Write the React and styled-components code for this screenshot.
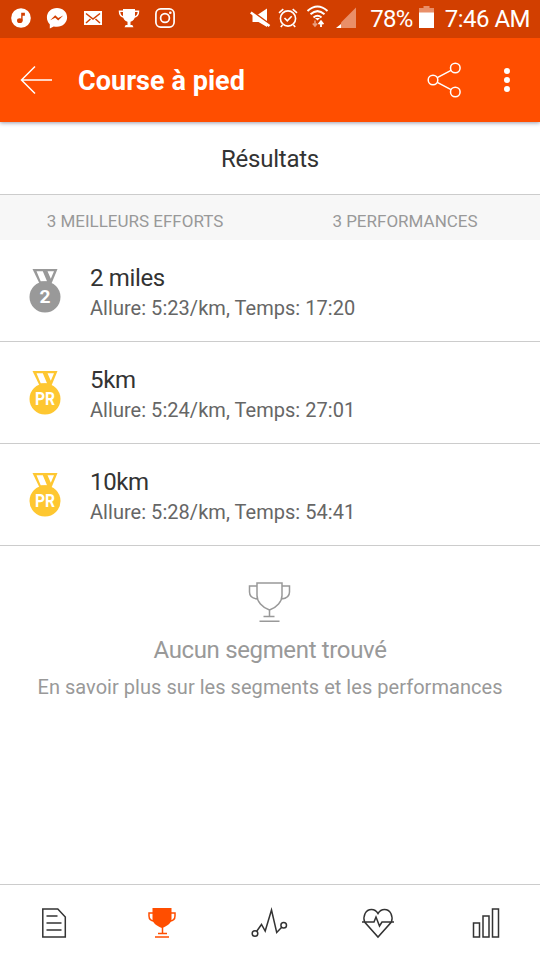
import React from 'react';
import styled, { createGlobalStyle } from 'styled-components';

const GlobalStyle = createGlobalStyle`
  body {
    margin: 0;
    background: #ffffff;
    font-family: Roboto, 'Liberation Sans', sans-serif;
  }
`;

const Screen = styled.div`
  display: flex;
  flex-direction: column;
  width: 540px;
  height: 960px;
  overflow: hidden;
  background: #ffffff;
`;

const StatusBar = styled.div`
  display: flex;
  justify-content: space-between;
  box-sizing: border-box;
  height: 38px;
  padding: 0 10px 0 9px;
  background: #d23f00;
  color: #ffffff;
  z-index: 2;
`;

const StatusGroup = styled.div`
  display: flex;
  align-items: center;
  gap: ${(props) => props.$gap || 0}px;
`;

const IconGroup = styled(StatusGroup)`
  padding-bottom: 2px;
`;

const StatusText = styled.span`
  font-size: 24px;
  line-height: 38px;
  letter-spacing: ${(props) => props.$spacing}px;
  white-space: nowrap;
`;

const Icon = styled.svg`
  display: block;
  flex: none;
  overflow: visible;
  fill: none;
  stroke: currentColor;
`;

const Battery = styled(Icon)`
  margin: -4px 11px 0 6px;
`;

const AppBar = styled.header`
  display: flex;
  align-items: center;
  box-sizing: border-box;
  height: 84px;
  padding: 0 20px;
  background: #ff4e00;
  color: #ffffff;
  box-shadow: 0 1px 4px rgba(30, 30, 70, 0.45);
  z-index: 1;
`;

const Title = styled.h1`
  flex: 1;
  margin: 2px 0 0 25px;
  font-size: 27px;
  line-height: 32px;
  font-weight: 700;
  letter-spacing: 0.05px;
`;

const MoreIcon = styled(Icon)`
  margin-left: 33px;
`;

const SectionTitle = styled.h2`
  box-sizing: border-box;
  height: 73px;
  margin: 0;
  padding-top: 1px;
  border-bottom: 1px solid #cccccc;
  color: #333333;
  font-size: 24px;
  font-weight: 400;
  letter-spacing: -0.25px;
  line-height: 72px;
  text-align: center;
`;

const Summary = styled.div`
  display: grid;
  grid-template-columns: 1fr 1fr;
  height: 45px;
  background: #f7f7f7;
  color: #999999;
  font-size: 17px;
  line-height: 53px;
  text-align: center;
`;

const EffortRow = styled.div`
  display: flex;
  box-sizing: border-box;
  height: 102px;
  padding: 23px 29px 0;
  border-bottom: 1px solid #cccccc;
`;

const Medal = styled(Icon)`
  margin-top: 5px;
  color: ${(props) => props.$color};
`;

const MedalText = styled.text`
  fill: #ffffff;
  stroke: none;
  font-size: 18px;
  font-weight: 700;
  text-anchor: middle;
`;

const EffortBody = styled.div`
  margin-left: 29px;
`;

const EffortName = styled.div`
  color: #333333;
  font-size: 24px;
  letter-spacing: -0.35px;
  line-height: 30px;
`;

const EffortDetail = styled.div`
  color: #666666;
  font-size: 20px;
  letter-spacing: 0.04px;
  line-height: 30px;
`;

const Empty = styled.div`
  display: flex;
  flex: 1;
  flex-direction: column;
  align-items: center;
  padding-top: 36px;
  color: #999999;
`;

const EmptyTitle = styled.div`
  margin-top: 12px;
  font-size: 24px;
  letter-spacing: -0.35px;
  line-height: 30px;
`;

const EmptyLink = styled.div`
  margin-top: 7px;
  font-size: 20px;
  letter-spacing: 0.04px;
  line-height: 30px;
`;

const TabBar = styled.nav`
  display: grid;
  grid-template-columns: repeat(5, 1fr);
  box-sizing: border-box;
  height: 76px;
  border-top: 1px solid #cccccc;
`;

const Tab = styled.div`
  display: flex;
  align-items: center;
  justify-content: center;
  color: ${(props) => (props.$active ? '#ff4e00' : '#333333')};
`;

const efforts = [
  { name: '2 miles', detail: 'Allure: 5:23/km, Temps: 17:20', medal: '2', color: '#999999' },
  { name: '5km', detail: 'Allure: 5:24/km, Temps: 27:01', medal: 'PR', color: '#fec731' },
  { name: '10km', detail: 'Allure: 5:28/km, Temps: 54:41', medal: 'PR', color: '#fec731' },
];

const NotificationIcons = () => (
  <IconGroup $gap={12}>
    <Icon width="24" height="24" viewBox="0 0 24 24">
      <circle cx="12" cy="12" r="9.8" fill="#fff" stroke="none" />
      <ellipse cx="10.8" cy="14.7" rx="2.8" ry="2.4" fill="#d23f00" stroke="none" />
      <path d="M12.2 14.7V6.8h3.7v3h-2.3v5z" fill="#d23f00" stroke="none" />
    </Icon>
    <Icon width="24" height="24" viewBox="0 0 24 24">
      <path d="M12 2C6.200 2 1.900 6.100 1.900 11.300c0 3.100 1.200 5.400 2.900 7v4.300l3.900-2.200c1 .3 2.100.4 3.300.4 5.800 0 10.100-4.200 10.100-9.500S17.800 2 12 2z" fill="#fff" stroke="none" />
      <path d="M5.200 14.300l5-5 3 2.600 5-2.500-5 5-3-2.600z" fill="#d23f00" stroke="none" />
    </Icon>
    <Icon width="24" height="24" viewBox="0 0 24 24">
      <path d="M3 5h18v14H3z" fill="#fff" stroke="none" />
      <path d="M5 7.500l7 5.500 7-5.500M5 17l4.500-4M19 17l-4.500-4" stroke="#d23f00" strokeWidth="1.500" />
    </Icon>
    <Icon width="24" height="24" viewBox="0 0 24 24">
      <path d="M6 3h12v7c0 3-2 5-4.500 5.700V19h1.800l1.200 2.200h-9L8.700 19h1.800v-3.300C8 15 6 13 6 10z" fill="#fff" stroke="none" />
      <path d="M6.500 5.200h-4c0 4 1.500 5.600 5 6M17.500 5.200h4c0 4-1.500 5.600-5 6" strokeWidth="1.500" />
    </Icon>
    <Icon width="24" height="24" viewBox="0 0 24 24">
      <rect x="2.900" y="2.900" width="18.200" height="18.200" rx="4.800" strokeWidth="1.700" />
      <circle cx="12" cy="12" r="4.400" strokeWidth="1.700" />
      <circle cx="17.300" cy="6.800" r="1.300" fill="#fff" stroke="none" />
    </Icon>
  </IconGroup>
);

const SystemIcons = () => (
  <StatusGroup>
    <IconGroup $gap={5}>
      <Icon width="24" height="24" viewBox="0 0 24 24">
        <path d="M3.500 8.500h5.500L18 2.500V21L9.500 16h-6z" fill="#fff" stroke="none" />
        <path d="M2 4.500l19 14" stroke="#d23f00" strokeWidth="2" />
        <path d="M1.800 6.500L20.500 20" strokeWidth="2.600" />
      </Icon>
      <Icon width="24" height="24" viewBox="1 0 24 24">
        <circle cx="11" cy="12.500" r="7.600" strokeWidth="1.600" />
        <path d="M7.500 12l2.800 2.900 4.400-4.600M5.500 19l-1.700 2M16.500 19l1.700 2M2 6.800l4.300-3.600M20 6.800l-4.300-3.600" strokeWidth="1.600" />
      </Icon>
      <Icon width="24" height="24" viewBox="1 0 24 24">
        <path d="M1.500 4.900Q11.500-3.900 21.500 4.900M4.500 8.300Q11.500 1.900 18.500 8.300M7.500 11.500Q11.500 8.100 15.500 11.500" strokeWidth="2" />
        <path d="M9 12h5l-2.500 2.500z" fill="#fff" stroke="none" />
        <path d="M9 14.500v5M6.800 17.500l2.200 2.500 2.200-2.500" opacity=".5" strokeWidth="1.600" />
        <path d="M15 21v-5M12.600 18.200l2.400-3 2.400 3" strokeWidth="1.800" />
      </Icon>
      <Icon width="24" height="24" viewBox="1 0 24 24">
        <path d="M21 1.500V22H6V16.500z" fill="#e98f69" stroke="none" />
        <path d="M6 18v4H1z" fill="#fff" stroke="none" />
      </Icon>
    </IconGroup>
    <StatusText $spacing={-0.7}>&nbsp;&nbsp;78%</StatusText>
    <Battery width="15" height="22" viewBox="0 0 15 22">
      <path d="M0 2h4.500V0h6v2H15v5H0z" fill="#e98f69" stroke="none" />
      <path d="M0 6.500h15V22H0z" fill="#fff" stroke="none" />
    </Battery>
    <StatusText $spacing={-0.5}>7:46 AM</StatusText>
  </StatusGroup>
);

const EffortMedal = ({ label, color }) => (
  <Medal width="32" height="46" viewBox="0 0 32 46" $color={color}>
    <path d="M3.500 1h25L22.500 15.500h-12z" fill="currentColor" stroke="none" />
    <path d="M7.500 3.300h6.300l4.200 10h-6.300zM18.500 3.300h6.500l-3.200 7.500z" fill="#fff" stroke="none" />
    <circle cx="16" cy="29" r="15.500" fill="currentColor" stroke="none" />
    <MedalText x="16" y="35.300" textLength={label === 'PR' ? 20 : 11} lengthAdjust="spacingAndGlyphs">
      {label}
    </MedalText>
  </Medal>
);

const App = () => (
  <Screen>
    <GlobalStyle />
    <StatusBar>
      <NotificationIcons />
      <SystemIcons />
    </StatusBar>
    <AppBar>
      <Icon width="33" height="30" viewBox="0 0 33 30" strokeWidth="1.500">
        <path d="M15 1.500L1.500 15 15 28.500M1.500 15H32" />
      </Icon>
      <Title>Course à pied</Title>
      <Icon width="34" height="36" viewBox="0 0 34 36" strokeWidth="1.500">
        <circle cx="6" cy="18" r="4.800" />
        <circle cx="28.300" cy="6" r="4.800" />
        <circle cx="28.300" cy="30" r="4.800" />
        <path d="M10.300 15.700L24 8.300M10.300 20.300L24 27.700" />
      </Icon>
      <MoreIcon width="26" height="24" viewBox="0 0 26 24">
        <g fill="#fff" stroke="none">
          <circle cx="13" cy="3" r="3" />
          <circle cx="13" cy="12" r="3" />
          <circle cx="13" cy="21" r="3" />
        </g>
      </MoreIcon>
    </AppBar>
    <SectionTitle>Résultats</SectionTitle>
    <Summary>
      <span>3 MEILLEURS EFFORTS</span>
      <span>3 PERFORMANCES</span>
    </Summary>
    {efforts.map((effort) => (
      <EffortRow key={effort.name}>
        <EffortMedal label={effort.medal} color={effort.color} />
        <EffortBody>
          <EffortName>{effort.name}</EffortName>
          <EffortDetail>{effort.detail}</EffortDetail>
        </EffortBody>
      </EffortRow>
    ))}
    <Empty>
      <Icon width="42" height="41" viewBox="0.5 0.5 42 41" strokeWidth="1.500">
        <path d="M8.500 1.500h25V14c0 6-5 12-12.500 14.500C13.500 26 8.500 20 8.500 14zM8.500 4.500H1v6c0 4 3 6.500 8 7M33.500 4.500H41v6c0 4-3 6.500-8 7M21 28.500V35M15 35h11M11 39.700h20" />
      </Icon>
      <EmptyTitle>Aucun segment trouvé</EmptyTitle>
      <EmptyLink>En savoir plus sur les segments et les performances</EmptyLink>
    </Empty>
    <TabBar>
      <Tab>
        <Icon width="24" height="30" viewBox="0 0 24 30" strokeWidth="1.500">
          <path d="M.8 1h15l7.500 8v20H.8zM4.500 8h11M4.500 15h15M4.500 22h15" />
        </Icon>
      </Tab>
      <Tab $active>
        <Icon width="28" height="30" viewBox="0 0 28 30" strokeWidth="1.500">
          <path d="M4.500 0h19v11c0 4-4 7-9.500 9-5.500-2-9.500-5-9.500-9z" fill="currentColor" stroke="none" />
          <path d="M5 5H1v3c0 3 1.500 5 6 5M23 5h4v3c0 3-1.500 5-6 5M14.500 19v6.500M10 25.500h9M7 29h14" />
        </Icon>
      </Tab>
      <Tab>
        <Icon width="36" height="30" viewBox="0.500 0 36 30" strokeWidth="1.500">
          <circle cx="3.500" cy="25.500" r="2.800" />
          <circle cx="32.200" cy="17.200" r="2.800" />
          <path d="M5.200 23.200L10 16.500l3.700 6.500L20 2l5.200 22.500 5-5.300" />
        </Icon>
      </Tab>
      <Tab>
        <Icon width="34" height="30" viewBox="0 0 34 30" strokeWidth="1.500">
          <path d="M1 14h12l2-5 3.500 9 2.500-4h12M3.600 14C1.700 8 4.500 1.500 10.500 1.500c3 0 5 1.500 6.500 4 1.500-2.500 3.500-4 6.500-4 6 0 8.800 6.500 6.900 12.500L17 29z" />
        </Icon>
      </Tab>
      <Tab>
        <Icon width="28" height="30" viewBox="0 0 28 30" strokeWidth="1.500">
          <path d="M1.500 15h6v14h-6zM11 8h6v21h-6zM20.500 1h6v28h-6z" />
        </Icon>
      </Tab>
    </TabBar>
  </Screen>
);

export default App;
